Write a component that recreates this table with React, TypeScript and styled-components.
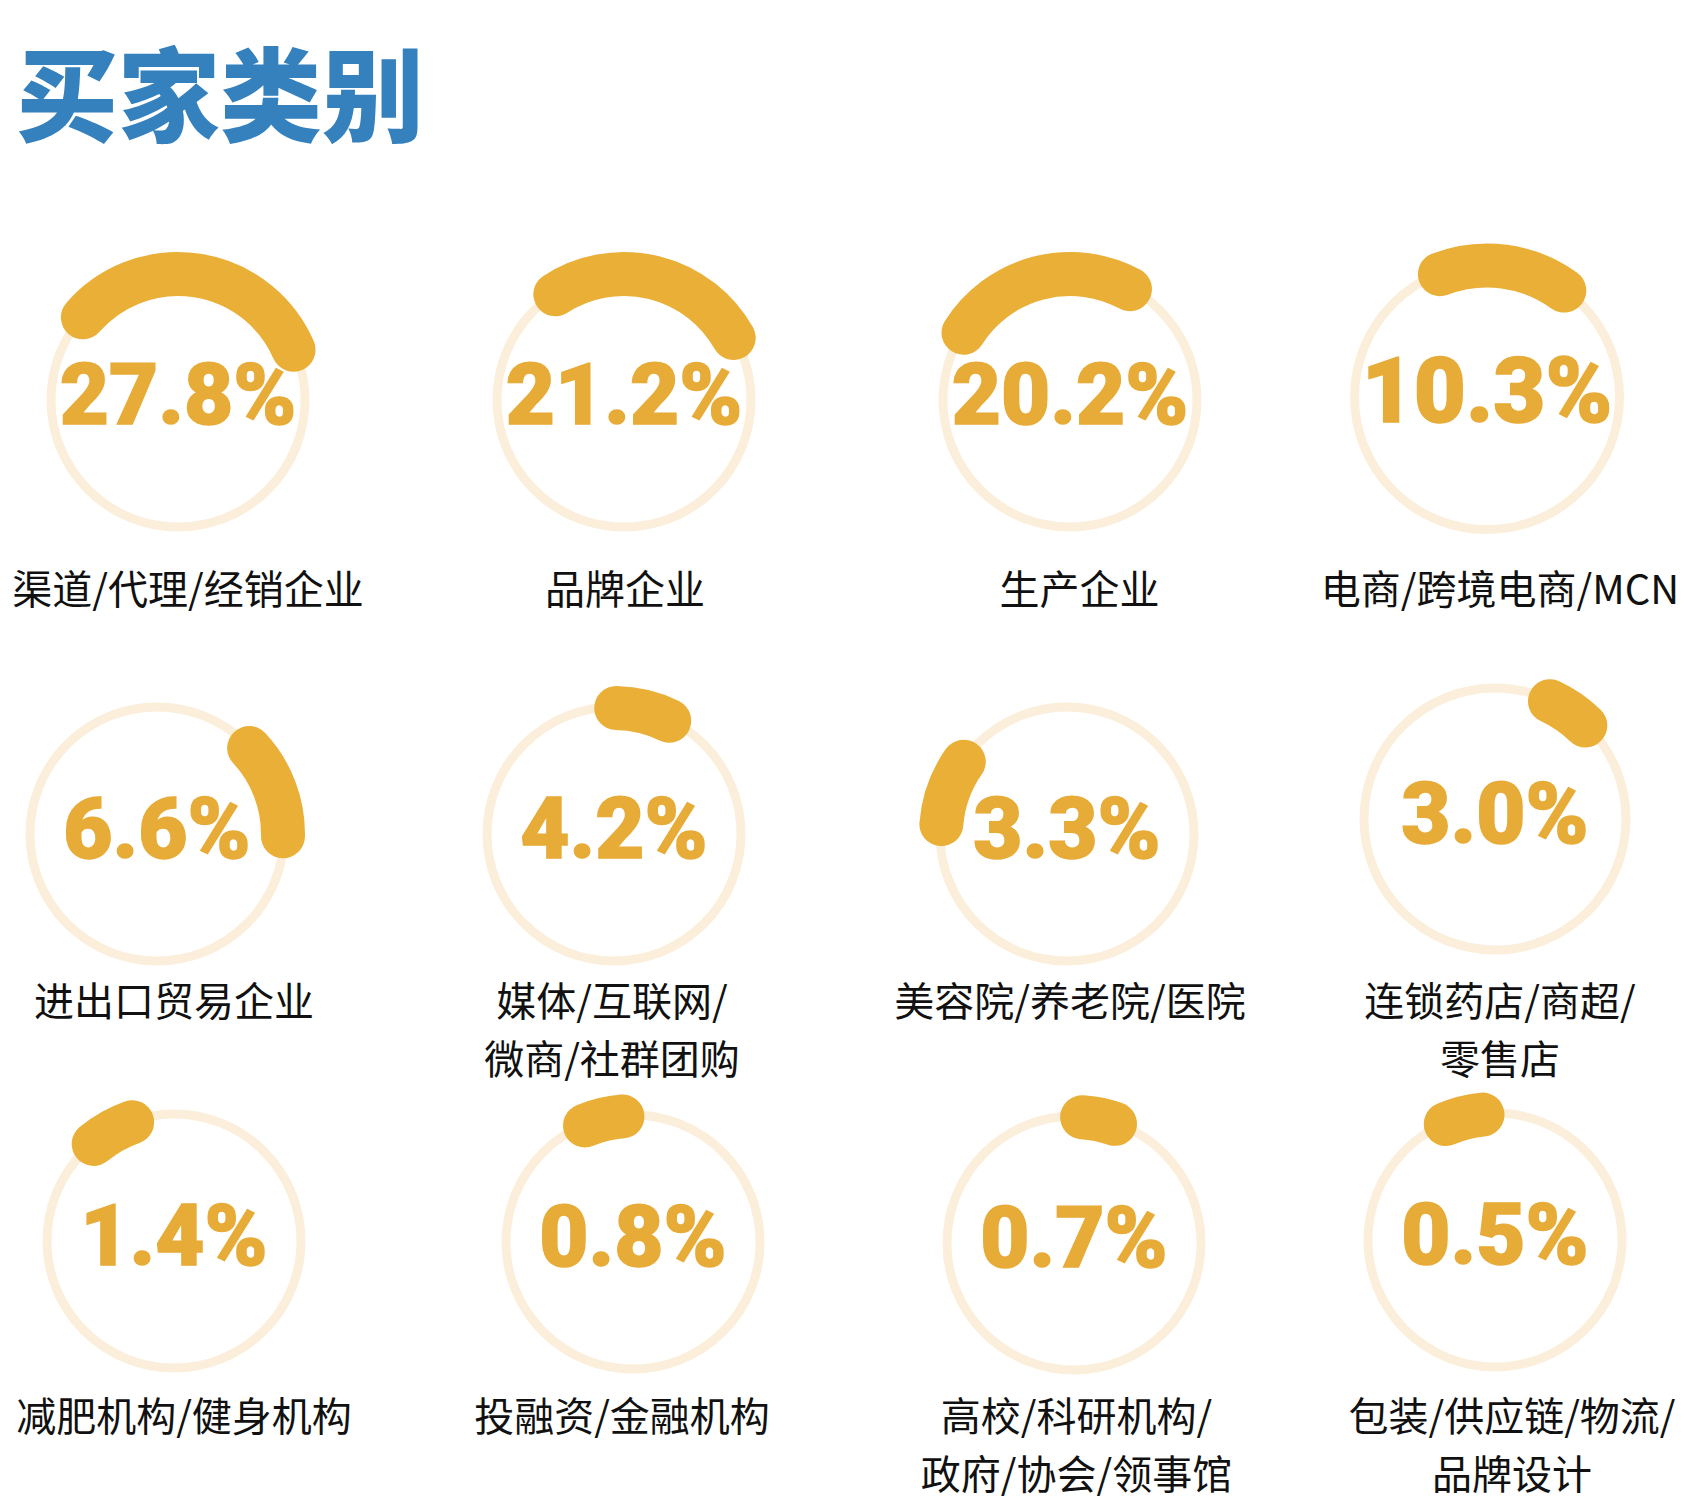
import React from 'react'
import styled, { createGlobalStyle } from 'styled-components'

type Buyer = {
  value: string,
  lines: string[],
  from: number,
  to: number,
  dx?: number,
  dy?: number,
  shift?: number,
  r?: number,
  size?: number,
}

const buyers: Buyer[] = [
  { value: '27.8%', lines: ['渠道/代理/经销企业'], from: -49, to: 66.5, dx: 4, shift: 14 },
  { value: '21.2%', lines: ['品牌企业'], from: -33, to: 60.5, shift: 1 },
  { value: '20.2%', lines: ['生产企业'], from: -57.7, to: 28.4, shift: 9.5 },
  { value: '10.3%', lines: ['电商/跨境电商/MCN'], from: -21, to: 36, dx: -7, dy: -3, shift: 6, r: 132.5, size: 90 },
  { value: '6.6%', lines: ['进出口贸易企业'], from: 47, to: 91, dx: -17 },
  { value: '4.2%', lines: ['媒体/互联网/', '微商/社群团购'], from: 1, to: 26, dx: -10, shift: -12 },
  { value: '3.3%', lines: ['美容院/养老院/医院'], from: -85.5, to: -55, dx: -3 },
  { value: '3.0%', lines: ['连锁药店/商超/', '零售店'], from: 25, to: 44, dx: 1, dy: -15, shift: 6, r: 131 },
  { value: '1.4%', lines: ['减肥机构/健身机构'], from: -39.6, to: -19.4, dy: -1, shift: 10 },
  { value: '0.8%', lines: ['投融资/金融机构'], from: -22.4, to: -4.8, dx: 9, shift: -2 },
  { value: '0.7%', lines: ['高校/科研机构/', '政府/协会/领事馆'], from: 3.7, to: 19, dx: 4, dy: 1, shift: 6.5 },
  { value: '0.5%', lines: ['包装/供应链/物流/', '品牌设计'], from: -23, to: -5.7, dx: 1, dy: -2, shift: 18 },
]

// gap between dial and label, one per row
const labelGaps = [18, -4, 3]

const GlobalStyle = createGlobalStyle`
  html, body {
    margin: 0;
    padding: 0;
    background: #ffffff;
    overflow: hidden;
  }
`

const Page = styled.div`
    width: 1688px;
    height: 1508px;
    font-family: 'Noto Sans CJK SC', 'Noto Sans', sans-serif;
    color: #111111;
`

const Title = styled.h1`
    margin: 0;
    padding: 39px 0 0 16px;
    font-size: 102px;
    line-height: 1;
    font-weight: 900;
    color: #3481bd;
`

const Grid = styled.div`
    display: grid;
    grid-template-columns: 450px 446px 424px 280px;
    grid-template-rows: 434px 408px auto;
    margin-top: 119px;
    padding-left: 34px;
`

const Cell = styled.div`
    display: flex;
    flex-direction: column;
    align-items: center;
    width: 280px;
`

const Dial = styled.div<{ $dx: number, $dy: number }>`
    display: grid;
    place-items: center;
    width: 280px;
    height: 280px;
    translate: ${p => p.$dx}px ${p => p.$dy}px;

    & > * {
      grid-area: 1 / 1;
    }
`

const Ring = styled.svg`
    width: 280px;
    height: 280px;
    overflow: visible;
`

const Percent = styled.div<{ $size: number }>`
    font-family: Roboto, 'Liberation Sans', sans-serif;
    font-weight: 900;
    font-size: ${p => p.$size}px;
    line-height: 1;
    padding-bottom: 10px;
    color: #e7ab37;
    -webkit-text-stroke: 1.5px #e7ab37;
    white-space: nowrap;
`

const Label = styled.div<{ $gap: number, $shift: number }>`
    margin-top: ${p => p.$gap}px;
    font-size: 40px;
    line-height: 58px;
    font-weight: 400;
    text-align: center;
    white-space: nowrap;
    translate: ${p => p.$shift}px 0;
`

const arcPath = (r: number, from: number, to: number) => {
  const pt = (a: number) => {
    const t = (a * Math.PI) / 180
    return [140 + r * Math.sin(t), 140 - r * Math.cos(t)]
  }
  const [x1, y1] = pt(from)
  const [x2, y2] = pt(to)
  const large = to - from > 180 ? 1 : 0
  return `M ${x1.toFixed(2)} ${y1.toFixed(2)} A ${r} ${r} 0 ${large} 1 ${x2.toFixed(2)} ${y2.toFixed(2)}`
}

const BuyerDial = ({ buyer, gap }: { buyer: Buyer, gap: number }) => {
  const r = buyer.r ?? 127
  return (
      <Cell>
          <Dial $dx={buyer.dx ?? 0} $dy={buyer.dy ?? 0}>
              <Ring viewBox="0 0 280 280">
                  <circle cx="140" cy="140" r={r} fill="none" stroke="#fbefdb" strokeWidth="9" />
                  <path
                      d={arcPath(r - 1, buyer.from, buyer.to)}
                      fill="none"
                      stroke="#eaaf36"
                      strokeWidth="44"
                      strokeLinecap="round"
                  />
              </Ring>
              <Percent $size={buyer.size ?? 85}>{buyer.value}</Percent>
          </Dial>
          <Label $gap={gap} $shift={buyer.shift ?? 0}>
              {buyer.lines.map((line, i) => (
                  <React.Fragment key={line}>
                      {i > 0 && <br />}
                      {line}
                  </React.Fragment>
              ))}
          </Label>
      </Cell>
  )
}

export default function App() {
  return (
      <Page>
          <GlobalStyle />
          <Title>买家类别</Title>
          <Grid>
              {buyers.map((b, i) => (
                  <BuyerDial key={b.value + i} buyer={b} gap={labelGaps[Math.floor(i / 4)]} />
              ))}
          </Grid>
      </Page>
  )
}
